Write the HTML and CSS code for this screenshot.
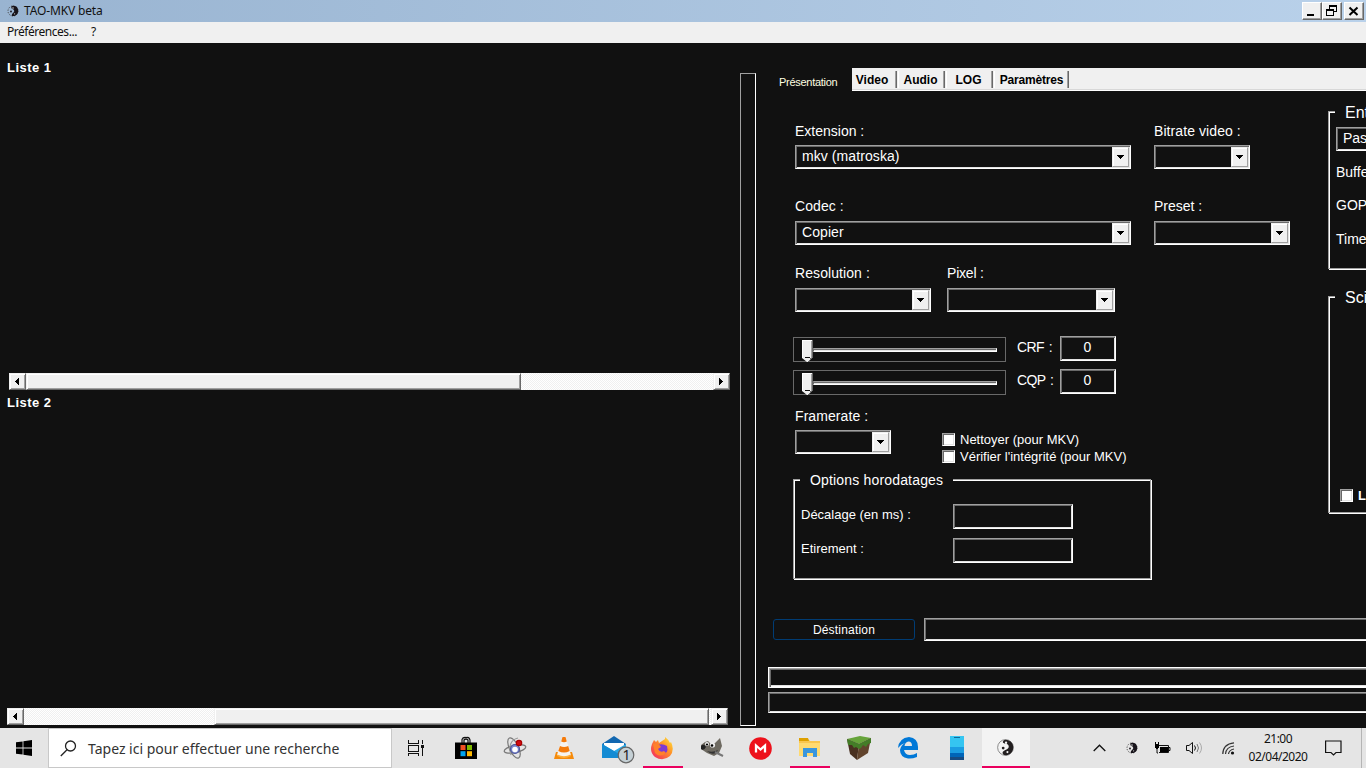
FILE: index.html
```html
<!DOCTYPE html>
<html lang="fr">
<head>
<meta charset="utf-8">
<title>TAO-MKV beta</title>
<link rel="stylesheet" href="styles.css">
</head>
<body>
<svg width="0" height="0" class="defs">
  <defs>
    <symbol id="taiji" viewBox="0 0 16 16">
      <circle cx="8" cy="8" r="7.4" fill="#f4f4f4" stroke="#777" stroke-width=".8"/>
      <path d="M8 .6A7.400 7.400 0 0 1 10 15.100C6.500 15.800 5 14.500 5.300 12.500C6 10 11.500 10.500 11 6.500C10.500 3.500 5 5 5.500 2.500C6 1.300 7 .6 8 .6Z" fill="#231f20"/>
      <circle cx="8.500" cy="3.500" r="1.100" fill="#f4f4f4"/><circle cx="5.800" cy="8.500" r="1.300" fill="#231f20"/>
      <circle cx="9.800" cy="12.300" r="1" fill="#f4f4f4"/>
    </symbol>
    <symbol id="taiji-small" viewBox="0 0 12 12">
      <circle cx="6" cy="6" r="5" fill="none" stroke="#444" stroke-width="1" stroke-dasharray="1.200 1.400"/>
      <path d="M5 1C10 0 12 4 11 7.500C10 10.500 7 11.500 5 11C4 10 5.500 8.500 6.500 7.500C8 6 7 4.500 5.500 4C4 3.500 4 1.800 5 1Z" fill="#17131a"/>
      <circle cx="6" cy="3" r=".8" fill="#ccc"/><circle cx="4" cy="6.500" r=".9" fill="#17131a"/>
      <circle cx="7.600" cy="8.800" r=".6" fill="#ccc"/>
    </symbol>
    <symbol id="drop" viewBox="0 0 7 4"><path d="M0 0h7v1H0zM1 1h5v1H1zM2 2h3v1H2zM3 3h1v1H3z" shape-rendering="crispEdges"/></symbol>
    <symbol id="left" viewBox="0 0 4 7"><path d="M3 0h1v7H3zM2 1h1v5H2zM1 2h1v3H1zM0 3h1v1H0z" shape-rendering="crispEdges"/></symbol>
    <symbol id="right" viewBox="0 0 4 7"><path d="M0 0h1v7H0zM1 1h1v5H1zM2 2h1v3H2zM3 3h1v1H3z" shape-rendering="crispEdges"/></symbol>
    <symbol id="thumb" viewBox="0 0 11 22">
      <path d="M0 0h11v17L6 22H5L0 18Z" fill="#f0f0f0"/>
      <path d="M0 0h10v1H1v17H0z" fill="#fff"/>
      <path d="M10 0h1v18h-1z" fill="#696969"/><path d="M9 1h1v17H9z" fill="#a0a0a0"/>
      <path d="M3 17h5v1H3z" fill="#111"/><path d="M8 18h2v1H9v1H8v1H7v1H6v-1h1v-1h1z" fill="#696969"/>
    </symbol>
  </defs>
</svg>

<header class="titlebar">
  <svg class="app-icon" width="12" height="12"><use href="#taiji-small"/></svg>
  <span class="app-title">TAO-MKV beta</span>
  <div class="window-buttons">
    <button class="winbtn"><svg width="16" height="14" shape-rendering="crispEdges"><path d="M4 11h7v2H4z"/></svg></button>
    <button class="winbtn"><svg width="16" height="14" shape-rendering="crispEdges"><path d="M6 2h8v7h-3V8h2V4H7v2H6zM3 6h8v7H3zM4 8v4h6V8z" fill-rule="evenodd"/></svg></button>
    <button class="winbtn winbtn-close"><svg width="18" height="16"><path d="m4.500 4.500 8 7.500M12.500 4.500l-8 7.500" stroke="#000" stroke-width="2"/></svg></button>
  </div>
</header>

<nav class="menubar"><span class="menu-pref">Préférences...</span><span>?</span></nav>

<main class="workspace">
  <section class="lists">
    <h2 class="list-title">Liste 1</h2>
    <div class="list-body list-body-one"></div>
    <div class="scroll scroll-one">
      <span class="scroll-btn"><svg width="4" height="7"><use href="#left"/></svg></span>
      <span class="scroll-thumb thumb-one"></span><span class="scroll-space"></span>
      <span class="scroll-btn"><svg width="4" height="7"><use href="#right"/></svg></span>
    </div>
    <h2 class="list-title list-title-two">Liste 2</h2>
    <div class="list-body list-body-two"></div>
    <div class="scroll scroll-two">
      <span class="scroll-btn"><svg width="4" height="7"><use href="#left"/></svg></span>
      <span class="scroll-space"></span><span class="scroll-thumb thumb-two"></span>
      <span class="scroll-btn"><svg width="4" height="7"><use href="#right"/></svg></span>
    </div>
  </section>

  <div class="splitter"></div>

  <section class="settings">
    <div class="tabs">
      <span class="tab-active">Présentation</span>
      <div class="tab-rest">
        <span class="tab tab-video">Video</span><span class="tab tab-audio">Audio</span><span class="tab tab-log">LOG</span><span class="tab tab-param">Paramètres</span>
      </div>
    </div>

    <div class="panel">
      <div class="options">
        <div class="row row-ext">
          <div class="field"><label class="lbl-ext">Extension :</label><div class="combo w336"><span class="value-mkv">mkv (matroska)</span><i class="drop"><svg width="7" height="4"><use href="#drop"/></svg></i></div></div>
          <div class="field gap-far"><label class="lbl-bit">Bitrate video :</label><div class="combo w96"><span></span><i class="drop"><svg width="7" height="4"><use href="#drop"/></svg></i></div></div>
        </div>
        <div class="row row-codec">
          <div class="field"><label class="lbl-codec">Codec :</label><div class="combo w336"><span class="value-copy">Copier</span><i class="drop"><svg width="7" height="4"><use href="#drop"/></svg></i></div></div>
          <div class="field gap-far"><label>Preset :</label><div class="combo w136"><span></span><i class="drop"><svg width="7" height="4"><use href="#drop"/></svg></i></div></div>
        </div>
        <div class="row row-res">
          <div class="field"><label class="lbl-res">Resolution :</label><div class="combo w136"><span></span><i class="drop"><svg width="7" height="4"><use href="#drop"/></svg></i></div></div>
          <div class="field gap-near"><label class="lbl-pixel">Pixel :</label><div class="combo w168"><span></span><i class="drop"><svg width="7" height="4"><use href="#drop"/></svg></i></div></div>
        </div>
        <div class="slider-row">
          <div class="slider"><svg class="knob" width="11" height="22"><use href="#thumb"/></svg><span class="groove"></span></div>
          <label>CRF :</label><div class="number">0</div>
        </div>
        <div class="slider-row slider-row-two">
          <div class="slider"><svg class="knob" width="11" height="22"><use href="#thumb"/></svg><span class="groove"></span></div>
          <label>CQP :</label><div class="number">0</div>
        </div>
        <div class="row row-rate">
          <div class="field"><label class="lbl-rate">Framerate :</label><div class="combo w96"><span></span><i class="drop"><svg width="7" height="4"><use href="#drop"/></svg></i></div></div>
          <div class="checks">
            <div class="check"><i class="box"></i><span class="check-one">Nettoyer (pour MKV)</span></div>
            <div class="check"><i class="box"></i><span class="check-two">Vérifier l'intégrité (pour MKV)</span></div>
          </div>
        </div>
        <div class="group time-group">
          <div class="legend legend-time">Options horodatages</div>
          <div class="time-row"><label class="lbl-off">Décalage (en ms) :</label><div class="input"></div></div>
          <div class="time-row"><label class="lbl-str">Etirement :</label><div class="input"></div></div>
        </div>
      </div>

      <div class="side">
        <div class="group side-group group-ent">
          <div class="legend legend-side">Ent</div>
          <div class="pass">Pas</div>
          <div class="side-label">Buffe</div><div class="side-label">GOP</div><div class="side-label">Time</div>
        </div>
        <div class="group side-group group-sci">
          <div class="legend legend-side">Sci</div>
          <div class="check check-sci"><i class="box"></i><b>L</b></div>
        </div>
      </div>
    </div>

    <div class="destination"><button class="dest-btn">Déstination</button><div class="dest-field"></div></div>
    <div class="progress progress-one"></div>
    <div class="progress progress-two"></div>
  </section>
</main>

<footer class="taskbar">
  <div class="start"><svg width="16" height="16"><path d="M0 2.300 6.600 1.400V7.500H0zM7.400 1.200 16 0V7.500H7.400zM0 8.400H6.600V14.600L0 13.700zM7.400 8.400H16V16L7.400 14.800z"/></svg></div>
  <div class="search"><svg width="17" height="17" fill="none" stroke="#222" stroke-width="1.300"><circle cx="10.500" cy="6" r="5"/><path d="M7 9.700 .8 16"/></svg><span>Tapez ici pour effectuer une recherche</span></div>
  <div class="apps">
    <div class="app app-view"><svg width="18" height="16" fill="#111" shape-rendering="crispEdges"><path d="M1 0h1v3h9V0h1v4H1zM1 5h11v7H1zM2 6v5h9V6zM1 16v-3h11v3h-1v-2H2v2zM15 0h1v4h-1zM15 8h1v8h-1zM14 5h3v3h-3z" fill-rule="evenodd"/></svg></div>
    <div class="app"><svg width="24" height="24"><path d="M8 7V3.500Q9 1 12 1.500Q15 .5 16 4V7M10 7V4Q12 2 14 4V7" fill="none" stroke="#111" stroke-width="1.200"/><path d="M1 6.500h22V23H1z"/><path d="M6.500 9h5v5h-5z" fill="#f25022"/><path d="M13 9h5v5h-5z" fill="#7fba00"/><path d="M6.500 15.200h5v5h-5z" fill="#00a4ef"/><path d="M13 15.200h5v5h-5z" fill="#ffb900"/></svg></div>
    <div class="app"><svg width="24" height="24" fill="none" stroke="#777" stroke-width="1.200"><ellipse cx="12" cy="13" rx="11" ry="3.600" transform="rotate(-12 12 13)"/><ellipse cx="11" cy="12" rx="11" ry="4.600" transform="rotate(65 11 12)"/><path d="M15 2Q4 5 8 19" stroke="#999"/><circle cx="12" cy="13" r="4.500" fill="#7a86cb" stroke="#4d569c"/><circle cx="12" cy="13.500" r="2.800" fill="#fff" stroke="none"/><circle cx="16" cy="7" r="2.700" fill="#d20b12" stroke="#a00"/></svg></div>
    <div class="app"><svg width="22" height="24"><path d="M3 16h16l2 7H1z" fill="#f58a0b"/><path d="M9.500 1h3L18 19Q11 23 4 19Z" fill="#f6f3ef"/><path d="M9.500 1h3l1.300 4.500Q11 7 8.200 5.500ZM7 10Q11 12 15.200 10L16.700 15Q11 18 5.300 15Z" fill="#f47a0b"/><path d="M4.400 18.500Q11 22 17.600 18.500L18 20Q11 24 4 20Z" fill="#ffae38"/></svg></div>
    <div class="app app-mail"><svg width="34" height="29"><path d="M1 9 13 1 25 9V14H1z" fill="#1267b0"/><path d="M3 8h20v8L13 19 3 14z" fill="#fff"/><path d="M1 9 13 16 25 9V23H1z" fill="#29a9e7"/><path d="M13 16 25 23H1L1 9z" fill="#148bd3"/><circle cx="25" cy="20" r="7.800" fill="#c5d0d5" stroke="#666" stroke-width="1.200"/><text x="21.500" y="25" class="badge-text">1</text></svg></div>
    <div class="app app-running app-fox"><svg width="24" height="24"><defs><linearGradient id="fire" x1="1" y1="0" x2="0" y2="1"><stop stop-color="#fff040"/><stop offset=".4" stop-color="#ff9327"/><stop offset="1" stop-color="#f21d68"/></linearGradient></defs><path d="M2 8 4 4 6 6 8 4 9 7 15 3 15 1Q19 4 20 7L21 6Q25 14 20 20Q13 26 5 21Q-1 16 2 8Z" fill="url(#fire)"/><path d="M8 9Q12 7 17 10Q19 18 12 18Q7 17 7 12Z" fill="#7e3bd1"/><path d="M3 8Q8 6 11 11L8 13Q10 17 14 15L16 17Q10 22 5 17Z" fill="#ff812b"/></svg></div>
    <div class="app"><svg width="24" height="22"><path d="M5 5 8 4 11 7 15 6 20 1 22 9 19 16 14 19 7 16 1 12 1 8Z" fill="#6e6a61"/><path d="M1 9Q4 6 6 10Q4 14 1 12Z" fill="#222"/><circle cx="7" cy="7" r="2" fill="#eee"/><circle cx="12.500" cy="8" r="2.600" fill="#eee"/><circle cx="7" cy="7.500" r="1.100"/><circle cx="12" cy="8.500" r="1.300"/><path d="M7 14Q13 16 18 13L16 16Q11 18 7 14Z" fill="#333"/><path d="m15 15 8 4" stroke="#777" stroke-width="2"/></svg></div>
    <div class="app"><svg width="23" height="23"><circle cx="11.500" cy="11.500" r="11.300" fill="#ed111b"/><path d="M7 15.500V8.500L11.500 12.500 16 8.500V15.500" fill="none" stroke="#fff" stroke-width="2.300"/></svg></div>
    <div class="app app-running"><svg width="22" height="20"><path d="M0 1h9l2 2h10v15H0z" fill="#f9c64e"/><path d="M0 0h9l1 3H0z" fill="#dea000"/><path d="M0 5h21v13H0z" fill="#ffda70"/><path d="M4 10h14v9h-4v-4H8v4H4z" fill="#3a96dd"/></svg></div>
    <div class="app"><svg width="24" height="24"><path d="M0 3 13 0 24 2 12 8Z" fill="#66a43b"/><path d="M0 3 12 8 10 24 3 18Z" fill="#493020"/><path d="M12 8 24 2 21 17 10 24Z" fill="#62442d"/><path d="M0 3 12 8V13L9 11 7 12 5 9 1 9ZM12 8 24 2V7L21 8 19 11 16 9 14 12 12 13Z" fill="#447d28"/></svg></div>
    <div class="app"><svg width="21" height="22"><path d="M0 11Q1 1 11 0Q20 1 20 10V13H6Q7 18 12 18Q16 18 19 16V20Q14 22 10 21.500Q2 20 2 13Q3 8 7 6Q3 7 0 11ZM6.500 9H14Q14 4.500 10.500 4.500Q7 5 6.500 9Z" fill="#0078d7" fill-rule="evenodd"/></svg></div>
    <div class="app"><svg width="14" height="24"><path d="M0 0h14v11H0z" fill="#35c5f1"/><path d="M0 11h14v6H0z" fill="#1b9de2"/><path d="M0 17h14v4H0z" fill="#0065b8"/><path d="M0 21h14v3H0z" fill="#174b82"/><path d="M4 1h6v1H4z" fill="#116a9a"/></svg></div>
    <div class="app app-current"><svg width="17" height="17"><use href="#taiji"/></svg></div>
  </div>
  <div class="tray">
    <svg class="tray-up" width="13" height="8" fill="none" stroke="#111" stroke-width="1.300"><path d="m.7 7 5.800-5.800L12.300 7"/></svg>
    <svg class="tray-tao" width="12" height="12"><use href="#taiji-small"/></svg>
    <svg class="tray-bat" width="17" height="13"><path d="M4.500 3.500h10v7H5M4 11h-1V5M14.500 5.500h1.500v3h-1.500" fill="none" stroke="#111"/><path d="M6 5h8v5H6zM1 2h4v4H4v1H2V6H1zM1 0h1v2H1zM4 0h1v2H4z"/></svg>
    <svg class="tray-sound" width="17" height="14" fill="none" stroke="#111"><path d="M.5 4.500H3l3.500-3v11L3 9.500H.5zM8.500 4.500q2 2.500 0 5"/><path d="M11 3q3 4 0 8" stroke="#777"/><path d="M13.500 1.500q4 5.500 0 11" stroke="#aaa"/></svg>
    <svg class="tray-net" width="13" height="13" fill="none" stroke="#333" stroke-width="1.200"><path d="M.8 12Q1 2 12 .8M3.500 12Q4 5 12 4M6.500 12Q7 8 12 7"/><circle cx="10.500" cy="11" r="1.600" fill="#111" stroke="none"/></svg>
    <div class="clock"><span class="time">21:00</span><span class="date">02/04/2020</span></div>
    <svg class="tray-note" width="17" height="16" fill="none" stroke="#111" stroke-width="1.200"><path d="M.6 1h15.400v11.500H11L8.500 15 6 12.500H.6z"/></svg>
    <span class="show-desktop"></span>
  </div>
</footer>
</body>
</html>
```
FILE: styles.css
```css
* { box-sizing: border-box; }
body { margin: 0; width: 1366px; height: 768px; overflow: hidden; display: flex; flex-direction: column; background: #111; color: #fff; font: 14px/16px "Liberation Sans", Arial, sans-serif; }
.defs { position: absolute; }
svg { flex: none; display: block; }
label, span, .legend, .side-label { white-space: nowrap; }

.titlebar { flex: none; height: 22px; display: flex; align-items: center; padding: 0 2px 0 7px; background: linear-gradient(90deg, #99b4d1, #b9d1ea); color: #111; font: 12px/16px "Noto Sans", sans-serif; }
.app-title { margin-left: 5px; letter-spacing: -.15px; }
.window-buttons { margin-left: auto; display: flex; }
.winbtn { width: 20px; height: 18px; padding: 0; display: flex; background: #f0f0f0; border: 1px solid; border-color: #fff #696969 #696969 #fff; box-shadow: inset -1px -1px #a0a0a0; }
.winbtn-close { margin-left: 2px; }
.menubar { flex: none; height: 21px; display: flex; gap: 14px; padding: 2px 7px; background: #f0f0f0; color: #111; font: 12px/16px "Noto Sans", sans-serif; }
.menu-pref { letter-spacing: -.47px; }

.workspace { flex: none; height: 685px; display: flex; overflow: hidden; }
.lists { flex: none; width: 740px; padding: 16px 0 0 7px; }
.list-title { margin: 0; height: 17px; font: bold 13px/17px "Liberation Sans", Arial, sans-serif; letter-spacing: .45px; }
.list-body-one { height: 297px; }
.list-title-two { margin-top: 4px; }
.list-body-two { height: 297px; }
.scroll { height: 17px; display: flex; background: repeating-conic-gradient(#fff 0 25%, #f0f0f0 0 50%) 0 0 / 2px 2px; }
.scroll-one { width: 721px; margin-left: 2px; }
.scroll-two { width: 721px; }
.scroll-btn, .scroll-thumb { background: #f0f0f0; border: 1px solid; border-color: #f0f0f0 #696969 #696969 #f0f0f0; box-shadow: inset 1px 1px #fff, inset -1px -1px #a0a0a0; }
.scroll-btn { width: 17px; padding-right: 2px; display: flex; align-items: center; justify-content: center; }
.scroll-thumb { width: 495px; }
.thumb-two { margin-right: 2px; }
.scroll-space { flex: 1; }

.splitter { flex: none; width: 16px; height: 653px; margin-top: 30px; border: 1px solid; border-color: #a0a0a0 #fff #fff #a0a0a0; }
.settings { flex: none; width: 700px; }
.tabs { height: 48px; padding-top: 25px; display: flex; }
.tab-active { width: 96px; padding: 6px 0 0 23px; font-size: 11px; color: #ffffe1; letter-spacing: -.28px; }
.tab-rest { flex: 1; height: 23px; padding-top: 3px; display: flex; background: #f0f0f0; border-bottom: 1px solid #fff; box-shadow: inset 0 -1px #d8d8d8; }
.tab { height: 17px; color: #000; font: bold 12px/18px "Liberation Sans", Arial, sans-serif; text-align: center; border-left: 1px solid #fff; border-right: 1px solid #696969; box-shadow: inset -1px 0 #a0a0a0; margin-right: 1px; }
.tab-video { width: 45px; padding-right: 4px; border-left: 0; }
.tab-audio { width: 47px; padding-right: 2px; }
.tab-log { width: 47px; padding-right: 2px; }
.tab-param { width: 75px; letter-spacing: -.2px; }

.panel { height: 527px; display: flex; }
.options { flex: none; width: 572px; padding: 32px 0 0 37px; }
.row { display: flex; padding-left: 2px; }
.field label { display: block; height: 22px; }
.lbl-res, .lbl-rate, .lbl-bit, .lbl-codec { letter-spacing: .08px; }
.lbl-pixel { letter-spacing: -.2px; }
.gap-far { margin-left: 23px; }
.gap-near { margin-left: 16px; }
.row-codec { margin-top: 30px; }
.row-codec label, .row-res label { line-height: 15px; }
.row-res { margin-top: 21px; }
.combo, .number, .input, .pass, .dest-field, .progress { border: 1px solid; border-color: #a0a0a0 #fff #fff #a0a0a0; box-shadow: inset 1px 1px #696969, inset -1px -1px #e3e3e3; }
.combo { height: 24px; padding: 1px 1px 1px 6px; display: flex; justify-content: space-between; line-height: 18px; letter-spacing: .08px; }
.w336 { width: 336px; }
.w168 { width: 168px; }
.w136 { width: 136px; }
.w96 { width: 96px; }
.drop { width: 17px; height: 20px; display: flex; align-items: center; justify-content: center; background: #f0f0f0; border: 1px solid; border-color: #f0f0f0 #a0a0a0 #a0a0a0 #f0f0f0; box-shadow: inset 1px 1px #fff; }
.slider-row { height: 26px; margin-top: 24px; display: flex; }
.slider-row-two { margin-top: 7px; }
.slider { width: 213px; height: 25px; margin-top: 1px; padding: 2px 8px; display: flex; border: 1px solid #696969; }
.groove { flex: 1; height: 4px; margin-top: 8px; border: 1px solid; border-color: #a0a0a0 #fff #fff #696969; background: linear-gradient(#696969 50%, #e3e3e3 50%); }
.slider-row label { width: 43px; margin-left: 11px; line-height: 23px; letter-spacing: -.6px; word-spacing: 1.5px; }
.number { width: 56px; height: 25px; text-align: center; line-height: 21px; padding-right: 1px; }
.row-rate { height: 46px; margin-top: 13px; }
.checks { margin: 25px 0 0 51px; }
.check { display: flex; height: 17px; font-size: 13px; line-height: 13px; }
.box { width: 13px; height: 13px; margin-right: 5px; background: #fff; border: 1px solid; border-color: #a0a0a0 #fff #fff #a0a0a0; box-shadow: inset 1px 1px #696969, inset -1px -1px #e3e3e3; }
.group { border: 1px solid #a0a0a0; box-shadow: 1px 1px #fff, inset 1px 1px #fff; }
.time-group { width: 358px; height: 100px; margin-top: 25px; padding-left: 6px; }
.legend { background: #111; }
.legend-time { width: 153px; height: 16px; margin-top: -8px; padding-left: 10px; letter-spacing: .17px; }
.time-row { display: flex; height: 25px; margin-top: 16px; font-size: 13px; line-height: 21px; }
.time-row + .time-row { margin-top: 9px; }
.time-row label { width: 153px; padding-left: 1px; }
.input { width: 120px; }

.side-group { width: 200px; padding-left: 7px; }
.group-ent { height: 158px; margin-top: 20px; }
.group-sci { height: 217px; margin-top: 27px; }
.legend-side { width: 190px; height: 18px; margin-top: -9px; margin-left: -1px; padding-left: 10px; font-size: 16px; line-height: 20px; }
.pass { height: 24px; margin-top: 6px; padding-left: 6px; line-height: 21px; }
.side-label { height: 33.3px; line-height: 42.6px; }
.check-sci { margin: 183px 0 0 4px; }

.destination { display: flex; padding-left: 17px; }
.dest-btn { width: 142px; height: 21px; margin-top: 1px; padding: 0; background: #111; color: #fff; border: 1px solid #003c74; border-radius: 3px; font: 12px/20px "Liberation Sans", Arial, sans-serif; letter-spacing: .2px; }
.dest-field { width: 500px; height: 23px; margin-left: 9px; }
.progress { width: 650px; height: 21px; margin-left: 12px; }
.progress-one { margin-top: 26px; border-color: #fff; box-shadow: inset 1px 1px #a0a0a0, inset 2px 2px #696969, inset -1px -1px #fff, inset 0 -2px #e3e3e3; }
.progress-two { margin-top: 4px; }

.taskbar { flex: none; height: 40px; display: flex; background: #e5e5e5; color: #111; font-family: "Noto Sans", sans-serif; }
.start { width: 48px; display: flex; align-items: center; justify-content: center; }
.search { width: 344px; padding-left: 11px; display: flex; align-items: center; background: #fff; border: 1px solid #c8c8c8; color: #333; font-size: 14px; }
.search span { margin: 1px 0 0 11px; }
.apps { display: flex; width: 638px; }
.app { flex: 0 0 49.166px; display: flex; align-items: center; justify-content: center; }
.app-view { padding-right: 2px; }
.app-mail svg { margin: 3px -9px 0 0; }
.badge-text { font: 14px "Noto Sans", sans-serif; fill: #222; }
.app-running { background: linear-gradient(#ea005e, #ea005e) 50% 100% / 40px 2px no-repeat; }
.app-fox { background-position: 5px 100%; }
.app-current { flex: 0 0 48px; background: #f3f3f3; border-bottom: 2px solid #ea005e; }
.tray { flex: 1; display: flex; align-items: center; }
.tray-up { margin-left: 63px; }
.tray-tao { margin-left: 20px; }
.tray-bat { margin-left: 16px; }
.tray-sound { margin-left: 15px; }
.tray-net { margin-left: 19px; }
.clock { width: 74px; margin-left: 6px; display: flex; flex-direction: column; align-items: center; font-size: 12px; line-height: 18px; }
.date { letter-spacing: -.5px; }
.time { letter-spacing: -.5px; }
.tray-note { margin-left: 10px; }
.show-desktop { height: 40px; margin-left: 19px; border-left: 1px solid #b5b5b5; }
```
